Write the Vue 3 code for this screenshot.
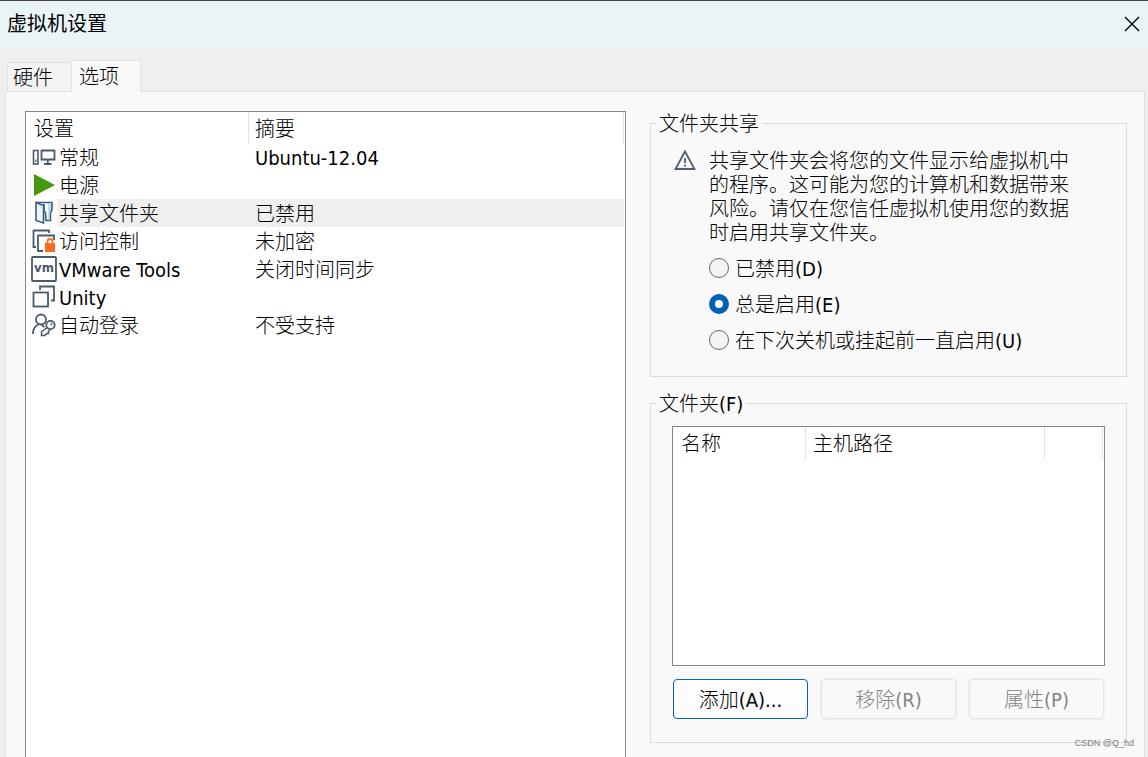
<script setup>
import { ref } from 'vue'

const rows = [
  { icon: 'general', name: '常规', value: 'Ubuntu-12.04' },
  { icon: 'power', name: '电源', value: '' },
  { icon: 'folder', name: '共享文件夹', value: '已禁用' },
  { icon: 'lock', name: '访问控制', value: '未加密' },
  { icon: 'vm', name: 'VMware Tools', value: '关闭时间同步' },
  { icon: 'unity', name: 'Unity', value: '' },
  { icon: 'login', name: '自动登录', value: '不受支持' },
]
const selected = ref('folder')
const options = [
  { id: 'off', label: '已禁用(D)' },
  { id: 'always', label: '总是启用(E)' },
  { id: 'until', label: '在下次关机或挂起前一直启用(U)' },
]
const sharing = ref('always')
</script>

<template>
  <div class="dialog">
    <header class="titlebar">
      <h1>虚拟机设置</h1>
      <button class="close" type="button" aria-label="关闭">
        <svg width="16" height="16" viewBox="0 0 16 16"><path d="M1 1L15 15M15 1L1 15" stroke="#111" stroke-width="1.5" fill="none" /></svg>
      </button>
    </header>

    <div class="tabs" role="tablist">
      <button class="tab" type="button" role="tab" aria-selected="false">硬件</button>
      <button class="tab active" type="button" role="tab" aria-selected="true">选项</button>
    </div>

    <main class="panel">
      <div class="list">
        <table class="settings">
          <colgroup><col class="c-icon" /><col class="c-name" /><col /></colgroup>
          <thead>
            <tr><th colspan="2"><span>设置</span></th><th><span>摘要</span></th></tr>
          </thead>
          <tbody>
            <tr v-for="r in rows" :key="r.icon" :class="{ selected: r.icon === selected }" @click="selected = r.icon">
              <td class="ico">
                <svg width="31" height="28" viewBox="0 0 31 28" fill="none" stroke="#4a5a68" stroke-width="1.8">
                  <template v-if="r.icon === 'general'">
                    <rect x="7.500" y="7.500" width="4.500" height="13.500" stroke-width="1.6" />
                    <path d="M9.800 16.500v2.500" stroke-width="1.2" />
                    <path d="M15.500 16.500V7.500H28.500V16.500zM18 21H25.500M21.800 17v4" />
                  </template>
                  <path v-else-if="r.icon === 'power'" d="M8 3L29 14L8 25z" fill="#44990e" stroke="none" />
                  <template v-else-if="r.icon === 'folder'">
                    <path d="M10 3.500H26V11L24.500 13.500V21.500H20L19.500 14L18 11.500V5" fill="#fff" stroke="#34607f" stroke-width="1.6" />
                    <path d="M22 5H25V11L23.500 13.500V20.500H22z" fill="#c3d9e8" stroke="none" />
                    <path d="M10 3.500L17.500 6.500V24L10 21.500z" fill="#eef4f8" stroke="#34607f" stroke-width="1.6" />
                  </template>
                  <template v-else-if="r.icon === 'lock'">
                    <path d="M10 20H7.500V3.500H23V6" />
                    <path d="M17 24H12V8.500H28V13" />
                    <path d="M21.500 17v-2.500a2.500 2.500 0 0 1 5 0v2.500" stroke="#f96a22" />
                    <rect x="19" y="16" width="10" height="9" fill="#f96a22" stroke="none" />
                  </template>
                  <template v-else-if="r.icon === 'vm'">
                    <rect x="6" y="2" width="24" height="24" rx="1" fill="#fff" />
                    <text x="18" y="17" text-anchor="middle" class="vm">vm</text>
                  </template>
                  <template v-else-if="r.icon === 'unity'">
                    <rect x="7.500" y="9.500" width="14.500" height="14" />
                    <path d="M14 7V3.500H28V17.500H25" />
                  </template>
                  <template v-else>
                    <circle cx="15" cy="8.500" r="5" />
                    <path d="M7 23C7 18 9 15 12.500 13.500M16 14.500L18.500 16" />
                    <circle cx="24.500" cy="14" r="4.200" />
                    <circle cx="25.500" cy="13" r=".8" stroke-width="1" />
                    <path d="M21 16.500L15.500 21V24.500H19L20.500 22.500H22.500V20L24.500 18.500" stroke-width="1.5" />
                  </template>
                </svg>
              </td>
              <td class="name">{{ r.name }}</td>
              <td class="value">{{ r.value }}</td>
            </tr>
          </tbody>
        </table>
      </div>

      <div class="side">
        <fieldset>
          <legend>文件夹共享</legend>
          <div class="share">
            <svg class="warn" width="22" height="22" viewBox="0 0 22 22" fill="none" stroke="#4f5f6d" stroke-width="1.8">
              <path d="M11 2.500L20.500 20H1.500z" /><path d="M11 9v5M11 15.500v2" />
            </svg>
            <div class="share-body">
              <p>共享文件夹会将您的文件显示给虚拟机中的程序。这可能为您的计算机和数据带来风险。请仅在您信任虚拟机使用您的数据时启用共享文件夹。</p>
              <label v-for="o in options" :key="o.id" class="radio">
                <input v-model="sharing" type="radio" name="sharing" :value="o.id" /><span>{{ o.label }}</span>
              </label>
            </div>
          </div>
        </fieldset>

        <fieldset>
          <legend>文件夹(F)</legend>
          <div class="folders">
            <div class="box">
              <table>
                <colgroup><col class="c-fname" /><col class="c-path" /><col /></colgroup>
                <thead>
                  <tr><th><span>名称</span></th><th><span>主机路径</span></th><th><span></span></th></tr>
                </thead>
              </table>
            </div>
            <div class="actions">
              <button type="button" class="btn primary">添加(A)...</button>
              <button type="button" class="btn" disabled>移除(R)</button>
              <button type="button" class="btn" disabled>属性(P)</button>
            </div>
          </div>
        </fieldset>
      </div>
    </main>
    <span class="mark">CSDN @Q_hd</span>
  </div>
</template>

<style>
html, body { background: #efefef; }
</style>

<style scoped>
.dialog {
  position: relative;
  box-sizing: border-box;
  height: 100vh;
  min-height: 720px;
  overflow: hidden;
  display: flex;
  flex-direction: column;
  border-top: 1px solid #45424a;
  background: #efefef;
  color: #000;
  font: 300 20px/24px "DejaVu Sans Condensed", "Noto Sans CJK SC", sans-serif;
}
button, input { font: inherit; color: inherit; }
.titlebar {
  box-sizing: border-box;
  display: flex;
  align-items: center;
  justify-content: space-between;
  height: 47px;
  padding: 0 8px 2px 7px;
  background: #eaf4f7;
}
h1 { margin: 0; font-size: 20px; font-weight: 400; }
.close { display: flex; padding: 0; border: 0; background: none; }
.tabs { display: flex; align-items: flex-end; margin: 12px 0 0 7px; }
.tab {
  box-sizing: border-box;
  height: 29px;
  padding: 2px 18px 0 5px;
  border: 1px solid #e2e2e2;
  border-width: 1px 0 0 1px;
  background: #f3f3f3;
}
.tab.active {
  position: relative;
  z-index: 1;
  height: 32px;
  margin-bottom: -1px;
  padding: 0 21px 0 7px;
  border-width: 1px 1px 0;
  background: #f9f9f9;
}
.panel {
  flex: 1;
  display: grid;
  grid-template-columns: 601fr 477fr;
  gap: 24px;
  margin: 0 3px 0 5px;
  padding: 19px 17px 0 19px;
  border: 1px solid #e2e2e2;
  border-bottom: 0;
  background: #f9f9f9;
}
.list { border: 1px solid #828790; border-bottom: 0; background: #fff; padding-right: 1px; }
table { width: 100%; table-layout: fixed; border-collapse: collapse; }
th, td { padding: 0; text-align: left; font-weight: 300; white-space: nowrap; }
th { height: 31px; }
th span { box-sizing: border-box; display: block; height: 30px; padding: 2px 0 0 8px; line-height: 28px; border-right: 1px solid #e2e2e2; }
.settings th:last-child span { padding-left: 6px; }
.c-icon { width: 31px; }
.c-name { width: 192px; }
td { box-sizing: border-box; height: 28px; line-height: 26px; }
.ico svg { display: block; }
td.name { padding: 2px 0 0 2px; }
td.value { padding: 2px 0 0 6px; }
.selected .name, .selected .value { background: #efefef; }
.vm { font: 700 13px "DejaVu Sans Condensed", sans-serif; fill: #4a5a68; stroke: none; }
.side { display: flex; flex-direction: column; gap: 14px; }
fieldset { min-width: 0; margin: 0; padding: 0; border: 1px solid #dcdcdc; }
legend { margin-left: 5px; padding: 2px 3px 0; line-height: 22px; }
.share { display: flex; align-items: flex-start; gap: 13px; padding: 14px 21px 18px 23px; }
.warn { flex: none; }
.share-body { flex: 1; }
p { max-width: 370px; margin: 0 0 5px; }
.radio { display: flex; align-items: center; gap: 6px; height: 36px; }
.radio span { padding-top: 2px; }
.radio input {
  appearance: none;
  box-sizing: border-box;
  width: 20px;
  height: 20px;
  margin: 0;
  border: 1px solid #666;
  border-radius: 50%;
  background: #f3f3f3;
}
.radio input:checked { border: 6px solid #005fb8; background: #fff; }
.folders { padding: 11px 21px 23px; }
.box { box-sizing: border-box; height: 240px; padding-right: 1px; border: 1px solid #828790; background: #fff; }
.box th { height: 32px; }
.box th span { height: 32px; line-height: 30px; }
.box th:nth-child(2) span { padding-left: 7px; }
.c-fname { width: 133px; }
.c-path { width: 239px; }
.actions { display: grid; grid-template-columns: 1fr 1fr 1fr; gap: 13px; margin-top: 13px; padding: 0 1px; }
.btn { box-sizing: border-box; height: 40px; padding: 2px 0 0; border: 1px solid #e6e6e6; border-radius: 4px; background: #f9f9f9; }
.btn.primary { border-color: #0067c0; background: #fdfdfd; }
.btn:disabled { color: #838383; outline: 1px solid #efefef; }
.mark { position: absolute; right: 14px; bottom: 6px; color: #777; font: 9px/16px "Liberation Sans", sans-serif; }
</style>
